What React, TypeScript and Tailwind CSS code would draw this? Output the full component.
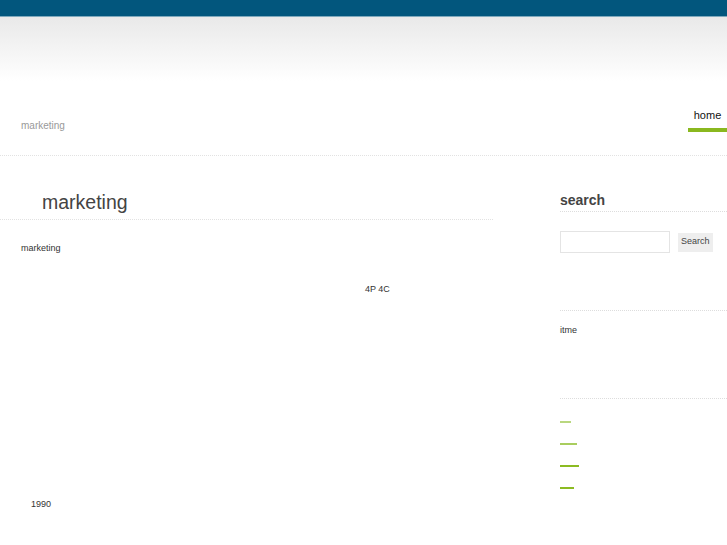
export default function App() {
  const links = [
    { w: "w-[11px]", c: "bg-[#b9d77f]" },
    { w: "w-[17px]", c: "bg-[#a9cd5e]" },
    { w: "w-[19px]", c: "bg-[#8cbb22]" },
    { w: "w-[14px]", c: "bg-[#8cbb22]" },
  ];

  return (
    <div className="min-h-screen bg-white font-['Liberation_Sans',Arial,sans-serif] text-[#333]">
      {/* Header */}
      <div className="h-[17px] bg-[#02567d] border-b border-[#7fa9bd]" />
      <div className="h-[64px] bg-gradient-to-b from-[#e9e9e9] to-white" />
      <div className="h-[75px] flex justify-between items-start border-b border-dotted border-[#e2e2e2]">
        <div className="pl-[21px] pt-[38px] text-[10px] leading-[14px] text-[#999]">marketing</div>
        <div className="pt-[27px] w-[39px] flex flex-col items-center">
          <a className="text-[11px] leading-[14px] text-[#111]">home</a>
          <div className="mt-[6px] h-[4px] w-full bg-[#8ab81f]" />
        </div>
      </div>

      {/* Body */}
      <div className="flex">
        <div className="w-[493px]">
          <h1 className="pt-[34px] pb-[5px] pl-[42px] text-[19.5px] leading-[24px] text-[#444] border-b border-dotted border-[#e2e2e2]">
            marketing
          </h1>
          <p className="mt-[22px] pl-[21px] text-[9px] leading-[12px]">marketing</p>
          <p className="mt-[29px] pl-[365px] text-[9px] leading-[12px]">4P 4C</p>
          <p className="mt-[203px] pl-[31px] text-[9px] leading-[12px]">1990</p>
        </div>

        <aside className="ml-[67px] w-[167px]">
          <h2 className="pt-[35px] pb-[2px] text-[14px] leading-[18px] font-bold text-[#444] border-b border-dotted border-[#ddd]">
            search
          </h2>
          <div className="pt-[19px] pb-[57px] flex items-center gap-[8px] border-b border-dotted border-[#ddd]">
            <input className="w-[110px] h-[22px] border border-[#e4e4e4] outline-none" />
            <button className="h-[19px] px-[3px] bg-[#eeeeee] text-[9px] text-[#444]">Search</button>
          </div>
          <div className="pt-[13px] pb-[62px] text-[9px] leading-[12px] border-b border-dotted border-[#ddd]">itme</div>
          <div className="pt-[2px]">
            {links.map((l, i) => (
              <div key={i} className="h-[22px] flex items-end">
                <span className={`h-[2px] ${l.w} ${l.c}`} />
              </div>
            ))}
          </div>
        </aside>
      </div>
    </div>
  );
}
